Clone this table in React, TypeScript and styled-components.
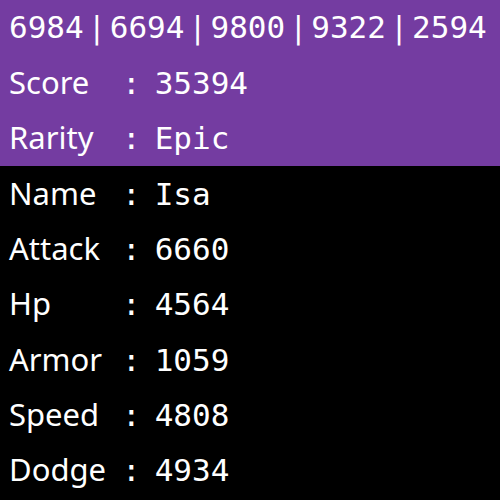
import styled, { createGlobalStyle } from 'styled-components';

const GlobalStyle = createGlobalStyle`
  html, body {
    margin: 0;
    padding: 0;
    background: #000;
  }
`;

const Screen = styled.div`
  width: 500px;
  height: 500px;
  background: #000;
  color: #fff;
  overflow: hidden;
`;

const Header = styled.div`
  background: #743ca1;
  height: 166px;
  display: flex;
  flex-direction: column;
`;

const Row = styled.div`
  height: 55.2px;
  display: flex;
  align-items: baseline;
  padding: 0 0 0 9px;
  line-height: 55.2px;
  box-sizing: border-box;
`;

const Label = styled.span`
  width: 113px;
  font-family: 'Noto Sans', sans-serif;
  font-size: 31px;
`;

const Mono = styled.span`
  font-family: 'DejaVu Sans Mono', monospace;
  font-size: 31px;
  white-space: pre;
`;

const Value = styled(Mono)`
  margin-left: 14px;
`;

const Pipe = styled.span`
  font-family: 'DejaVu Sans', sans-serif;
  font-size: 30px;
  margin: 0 8px;
`;

const stats = ['6984', '6694', '9800', '9322', '2594'];

const rows: [string, string][] = [
  ['Name', 'Isa'],
  ['Attack', '6660'],
  ['Hp', '4564'],
  ['Armor', '1059'],
  ['Speed', '4808'],
  ['Dodge', '4934'],
];

const StatLine = ({ label, value }: { label: string; value: string }) => (
  <Row>
    <Label>{label}</Label>
    <Mono>:</Mono>
    <Value>{value}</Value>
  </Row>
);

export default function App() {
  return (
    <Screen>
      <GlobalStyle />
      <Header>
        <Row>
          {stats.map((s, i) => (
            <span key={i}>
              {i > 0 && <Pipe>|</Pipe>}
              <Mono>{s}</Mono>
            </span>
          ))}
        </Row>
        <StatLine label="Score" value="35394" />
        <StatLine label="Rarity" value="Epic" />
      </Header>
      {rows.map(([l, v]) => (
        <StatLine key={l} label={l} value={v} />
      ))}
    </Screen>
  );
}
